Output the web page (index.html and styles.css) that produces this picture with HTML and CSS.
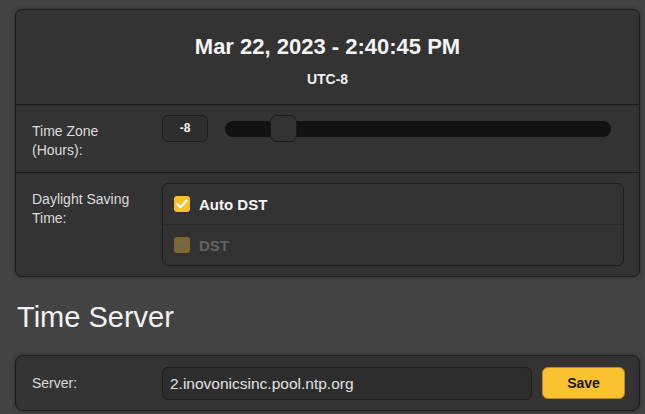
FILE: index.html
```html
<!DOCTYPE html>
<html lang="en">
<head>
<meta charset="utf-8">
<title>Time Settings</title>
<link rel="stylesheet" href="styles.css">
</head>
<body>
<main class="page">
  <section class="card">
    <header class="clock">
      <div class="clock-date">Mar 22, 2023 - 2:40:45 PM</div>
      <div class="clock-zone">UTC-8</div>
    </header>

    <div class="row row-tz">
      <div class="row-label">Time Zone<br>(Hours):</div>
      <div class="row-control tz-control">
        <div class="num-box">-8</div>
        <div class="slider">
          <div class="slider-track"></div>
          <div class="slider-thumb"></div>
        </div>
      </div>
    </div>

    <div class="row row-dst">
      <div class="row-label">Daylight Saving<br>Time:</div>
      <div class="row-control">
        <div class="check-group">
          <label class="check-item">
            <span class="check-box">
              <svg viewBox="0 0 16 16" width="16" height="16"><path d="M3.6 8.4 L6.6 11.2 L12.4 4.8" fill="none" stroke="#fff" stroke-width="2.4" stroke-linecap="round" stroke-linejoin="round"/></svg>
            </span>
            <span class="check-text">Auto DST</span>
          </label>
          <label class="check-item is-disabled">
            <span class="check-box">
              <svg viewBox="0 0 16 16" width="16" height="16"><path d="M3.6 8.4 L6.6 11.2 L12.4 4.8" fill="none" stroke="#fff" stroke-width="2.4" stroke-linecap="round" stroke-linejoin="round"/></svg>
            </span>
            <span class="check-text">DST</span>
          </label>
        </div>
      </div>
    </div>
  </section>

  <h2 class="section-title">Time Server</h2>

  <section class="card server-card">
    <div class="server-label">Server:</div>
    <div class="server-input">2.inovonicsinc.pool.ntp.org</div>
    <button class="btn-save" type="button">Save</button>
  </section>
</main>
</body>
</html>
```

FILE: styles.css
```css
html, body {
  margin: 0;
  padding: 0;
}

body {
  background: #434343;
  font-family: "Liberation Sans", Arial, sans-serif;
  color: #e6e6e6;
  width: 645px;
  height: 414px;
  overflow: hidden;
}

.page {
  padding: 9px 5px 0 15px;
}

.card {
  background: #333333;
  border: 1px solid #1c1c1c;
  border-radius: 7px;
  box-shadow: 0 0 4px rgba(0, 0, 0, 0.35);
}

/* clock header */
.clock {
  height: 95px;
  box-sizing: border-box;
  padding-top: 24px;
  border-bottom: 1px solid #1a1a1a;
  text-align: center;
}

.clock-date {
  font-size: 22px;
  font-weight: bold;
  line-height: 26px;
  color: #f4f4f4;
}

.clock-zone {
  margin-top: 11px;
  font-size: 14px;
  font-weight: bold;
  line-height: 17px;
  color: #f0f0f0;
}

/* settings rows */
.row {
  display: flex;
  padding: 10px 14px 10px 16px;
}

.row-tz {
  border-bottom: 1px solid #1a1a1a;
}

.row-label {
  width: 130px;
  flex: none;
  padding-top: 7px;
  font-size: 14px;
  line-height: 19px;
  color: #dcdcdc;
}

.row-control {
  flex: 1;
  min-width: 0;
}

.tz-control {
  display: flex;
  align-items: center;
  gap: 17px;
  padding-bottom: 20px;
}

.num-box {
  width: 46px;
  height: 27px;
  box-sizing: border-box;
  border: 1px solid #1d1d1d;
  border-radius: 6px;
  background: #2e2e2e;
  font-size: 12px;
  font-weight: bold;
  line-height: 25px;
  text-align: center;
  color: #f2f2f2;
}

.slider {
  position: relative;
  flex: 1;
  height: 27px;
  margin-right: 14px;
  display: flex;
  align-items: center;
}

.slider-track {
  width: 100%;
  height: 16px;
  border-radius: 8px;
  background: #121212;
}

.slider-thumb {
  position: absolute;
  left: 45px;
  top: 0;
  width: 27px;
  height: 27px;
  box-sizing: border-box;
  border: 1px solid #1a1a1a;
  border-radius: 7px;
  background: #343434;
}

.row-dst {
  padding-right: 15px;
}

/* checkbox group */
.check-group {
  border: 1px solid #1e1e1e;
  border-radius: 6px;
  background: #323232;
  overflow: hidden;
}

.check-item {
  display: flex;
  align-items: center;
  gap: 9px;
  height: 40px;
  padding-left: 11px;
  font-size: 15px;
  font-weight: bold;
  color: #f6f6f6;
}

.check-item + .check-item {
  border-top: 1px solid #2b2b2b;
}

.check-box {
  width: 16px;
  height: 16px;
  border-radius: 3px;
  background: #f7c12c;
  display: flex;
}

.is-disabled .check-box {
  opacity: 0.38;
}

.is-disabled .check-box svg path {
  stroke: #bbbbbb;
}

.is-disabled .check-text {
  color: #626262;
}

/* time server */
.section-title {
  margin: 23px 0 21px 2px;
  font-size: 29px;
  font-weight: normal;
  line-height: 34px;
  color: #f2f2f2;
}

.server-card {
  display: flex;
  align-items: center;
  height: 56px;
  box-sizing: border-box;
  padding: 0 14px 0 16px;
  border-radius: 8px;
}

.server-label {
  width: 130px;
  flex: none;
  font-size: 14px;
  color: #dcdcdc;
}

.server-input {
  width: 370px;
  height: 33px;
  box-sizing: border-box;
  padding-left: 7px;
  border: 1px solid #1d1d1d;
  border-radius: 6px;
  background: #2d2d2d;
  font-size: 15.5px;
  line-height: 31px;
  color: #e2e2e2;
}

.btn-save {
  margin-left: 10px;
  width: 83px;
  height: 32px;
  border: 1px solid #b8891a;
  border-radius: 6px;
  background: #fbc22f;
  font-family: "Liberation Sans", Arial, sans-serif;
  font-size: 14px;
  font-weight: bold;
  color: #161616;
  padding: 0;
}
```
